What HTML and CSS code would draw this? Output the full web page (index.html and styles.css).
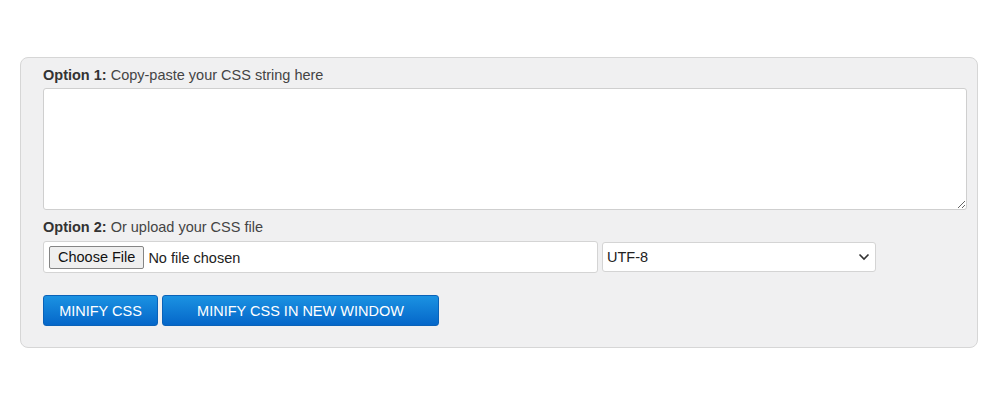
FILE: index.html
```html
<!DOCTYPE html>
<html lang="en">
<head>
<meta charset="utf-8">
<title>CSS Minifier</title>
<link rel="stylesheet" href="styles.css">
</head>
<body>
<form class="panel">
  <label class="opt-label" for="css-input"><b>Option 1:</b> Copy-paste your CSS string here</label>
  <textarea id="css-input" class="css-input"></textarea>
  <label class="opt-label opt-label-2" for="css-file"><b>Option 2:</b> Or upload your CSS file</label>
  <div class="upload-row">
    <div class="file-box"><input id="css-file" class="file-input" type="file"></div>
    <div class="select-wrap">
      <select class="charset">
        <option>UTF-8</option>
      </select>
      <svg class="chevron" width="12" height="8" viewBox="0 0 12 8"><path d="M1.5 1.5 6 6l4.5-4.5" fill="none" stroke="#333" stroke-width="1.6"/></svg>
    </div>
  </div>
  <div class="actions">
    <button type="button" class="btn btn-short">MINIFY CSS</button>
    <button type="button" class="btn btn-long">MINIFY CSS IN NEW WINDOW</button>
  </div>
</form>
</body>
</html>
```

FILE: styles.css
```css
html, body {
  margin: 0;
  background: #ffffff;
}
body {
  font-family: "Liberation Sans", Arial, sans-serif;
  font-size: 14.5px;
  color: #333333;
  padding: 57px 22px 0 20px;
}
.panel {
  box-sizing: border-box;
  width: 958px;
  height: 291px;
  background: #f0f0f1;
  border: 1px solid #d6d6d6;
  border-radius: 8px;
  padding: 9px 10px 0 22px;
  display: flex;
  flex-direction: column;
}
.opt-label {
  display: block;
  line-height: 16px;
  color: #444444;
}
.opt-label b {
  color: #333333;
}
.css-input {
  box-sizing: border-box;
  margin: 5px 0 0 0;
  width: 924px;
  height: 122px;
  border: 1px solid #cfcfcf;
  border-radius: 3px;
  background: #ffffff;
  font-family: "Liberation Mono", monospace;
  font-size: 13px;
  padding: 4px;
  outline: none;
}
.opt-label-2 {
  margin-top: 9px;
}
.upload-row {
  display: flex;
  align-items: center;
  gap: 4px;
  margin-top: 6px;
}
.file-box {
  box-sizing: border-box;
  width: 555px;
  height: 32px;
  background: #ffffff;
  border: 1px solid #d4d4d4;
  border-radius: 3px;
  display: flex;
  align-items: center;
  padding-left: 5px;
}
.file-input {
  font-family: "Liberation Sans", Arial, sans-serif;
  font-size: 14.5px;
  color: #222222;
}
.file-input::file-selector-button {
  font-family: "Liberation Sans", Arial, sans-serif;
  font-size: 14.5px;
  color: #111111;
  height: 23px;
  padding: 0 8px;
  margin-right: 4px;
  background: #efefef;
  border: 1px solid #858585;
  border-radius: 2px;
}
.select-wrap {
  position: relative;
  width: 274px;
  height: 30px;
}
.charset {
  appearance: none;
  -webkit-appearance: none;
  box-sizing: border-box;
  width: 100%;
  height: 100%;
  background: #ffffff;
  border: 1px solid #d4d4d4;
  border-radius: 3px;
  font-family: "Liberation Sans", Arial, sans-serif;
  font-size: 14.5px;
  color: #222222;
  padding: 0 24px 0 4px;
  outline: none;
}
.chevron {
  position: absolute;
  right: 6px;
  top: 11px;
  pointer-events: none;
}
.actions {
  display: flex;
  gap: 4px;
  margin-top: 22px;
}
.btn {
  height: 31px;
  border: 1px solid #0a62b8;
  border-radius: 3px;
  background: linear-gradient(#1b92e2, #0567c9);
  color: #ffffff;
  font-family: "Liberation Sans", Arial, sans-serif;
  font-size: 14.5px;
  cursor: pointer;
}
.btn-short {
  width: 115px;
}
.btn-long {
  width: 277px;
}
```
